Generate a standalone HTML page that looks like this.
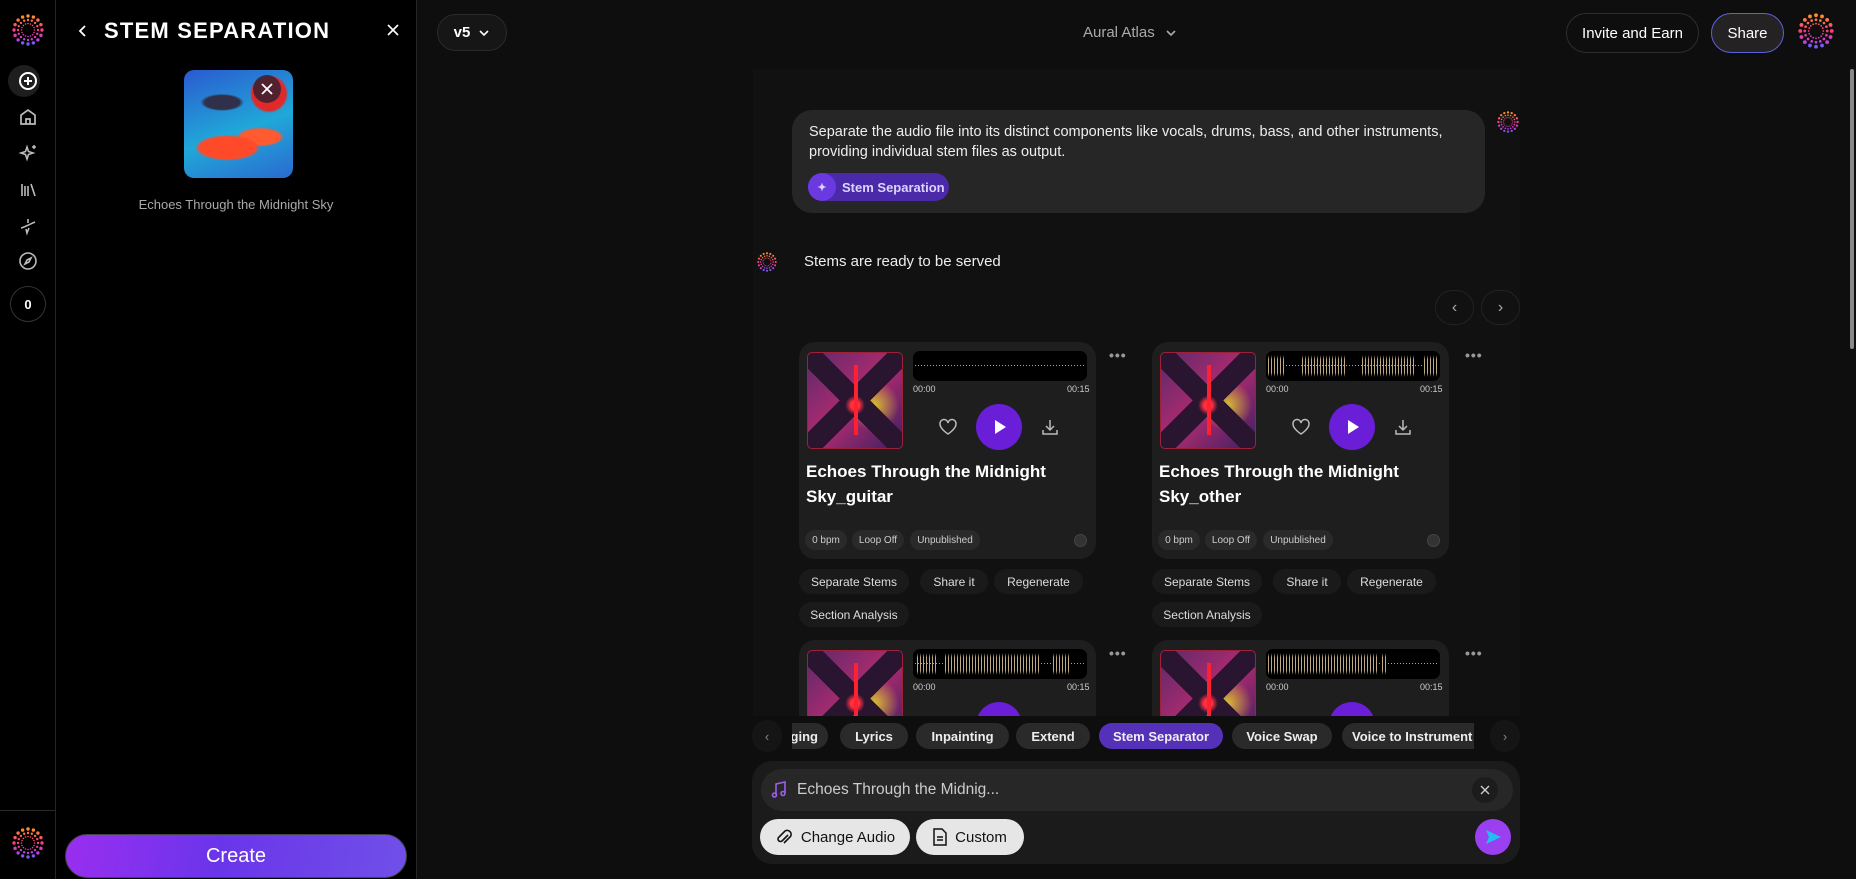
<!DOCTYPE html>
<html><head><meta charset="utf-8"><style>
*{box-sizing:border-box;margin:0;padding:0}
html,body{width:1856px;height:879px;overflow:hidden}
body{background:#0e0e0e;font-family:"Liberation Sans",sans-serif;color:#fff;position:relative}
.a{position:absolute}
.rail{left:0;top:0;width:56px;height:879px;background:#000;border-right:1px solid #262626}
.panel{left:56px;top:0;width:361px;height:879px;background:#000;border-right:1px solid #262626}
.ic{position:absolute;left:16px;width:24px;height:24px}
.pill{position:absolute;border-radius:999px;display:flex;align-items:center;justify-content:center;white-space:nowrap}
.card{position:absolute;width:297px;height:217px;background:#1e1e1e;border-radius:16px}
.art{position:absolute;left:8px;top:10px;width:96px;height:97px;border-radius:5px;border:1px solid #a0203a;background:
radial-gradient(circle at 50% 55%,#ff3040 0 6%,transparent 14%),
linear-gradient(45deg,transparent 42%,#2a1530 42% 58%,transparent 58%),
linear-gradient(-45deg,transparent 42%,#2a1530 42% 58%,transparent 58%),
radial-gradient(circle at 70% 55%,#d8c030 0,transparent 30%),
linear-gradient(135deg,#5a2a6a,#b02a70 50%,#3a2060);overflow:hidden}
.art:before{content:"";position:absolute;left:46px;top:12px;width:4px;height:70px;background:#ff2030}
.wave{position:absolute;left:114px;top:9px;width:174px;height:30px;background:#000;border-radius:7px;overflow:hidden}
.wave i{position:absolute;left:2px;right:2px;top:14px;height:1px;background:repeating-linear-gradient(90deg,#b8a47a 0 1px,transparent 1px 3px)}
.wave b{position:absolute;top:4px;height:22px;background:repeating-linear-gradient(90deg,#c0ab80 0 1px,transparent 1px 3px);-webkit-mask:linear-gradient(#0000 0,#000 20% 80%,#0000)}
.tm{position:absolute;top:42px;font-size:9px;color:#ccc}
.play{position:absolute;left:177px;top:62px;width:46px;height:46px;border-radius:50%;background:#6a1ed8}
.ttl{position:absolute;left:7px;top:117px;font-size:17px;font-weight:bold;line-height:25px;color:#fff}
.chip{position:absolute;top:188px;height:20px;background:#2a2a2a;border-radius:10px;font-size:10px;color:#ccc;display:flex;align-items:center;justify-content:center}
.dot3{position:absolute;top:17px;font-size:14px;letter-spacing:1px;color:#999;font-weight:bold}
.act{position:absolute;height:25px;background:#1a1a1a;border-radius:13px;font-size:12px;color:#ddd;display:flex;align-items:center;justify-content:center;white-space:nowrap}
.tool{position:absolute;top:7px;height:26px;background:#2a2a2a;border-radius:13px;font-size:13px;font-weight:bold;color:#eee;display:flex;align-items:center;justify-content:center;white-space:nowrap}
</style></head><body>
<svg width="0" height="0" style="position:absolute"><defs>
<linearGradient id="lg" x1="0" y1="-16" x2="0" y2="16" gradientUnits="userSpaceOnUse"><stop offset="0" stop-color="#ff9a1a"/><stop offset=".5" stop-color="#ff3a80"/><stop offset=".8" stop-color="#c040e0"/><stop offset="1" stop-color="#4070ff"/></linearGradient>
<symbol id="logo" viewBox="-16 -16 32 32"><g fill="url(#lg)">
<circle cx="14" cy="0" r="1.7"/><circle cx="12.93" cy="5.36" r="1.7"/><circle cx="9.9" cy="9.9" r="1.7"/><circle cx="5.36" cy="12.93" r="1.7"/><circle cx="0" cy="14" r="1.7"/><circle cx="-5.36" cy="12.93" r="1.7"/><circle cx="-9.9" cy="9.9" r="1.7"/><circle cx="-12.93" cy="5.36" r="1.7"/><circle cx="-14" cy="0" r="1.7"/><circle cx="-12.93" cy="-5.36" r="1.7"/><circle cx="-9.9" cy="-9.9" r="1.7"/><circle cx="-5.36" cy="-12.93" r="1.7"/><circle cx="0" cy="-14" r="1.7"/><circle cx="5.36" cy="-12.93" r="1.7"/><circle cx="9.9" cy="-9.9" r="1.7"/><circle cx="12.93" cy="-5.36" r="1.7"/>
<circle cx="10" cy="0" r="1.2"/><circle cx="9.24" cy="3.83" r="1.2"/><circle cx="7.07" cy="7.07" r="1.2"/><circle cx="3.83" cy="9.24" r="1.2"/><circle cx="0" cy="10" r="1.2"/><circle cx="-3.83" cy="9.24" r="1.2"/><circle cx="-7.07" cy="7.07" r="1.2"/><circle cx="-9.24" cy="3.83" r="1.2"/><circle cx="-10" cy="0" r="1.2"/><circle cx="-9.24" cy="-3.83" r="1.2"/><circle cx="-7.07" cy="-7.07" r="1.2"/><circle cx="-3.83" cy="-9.24" r="1.2"/><circle cx="0" cy="-10" r="1.2"/><circle cx="3.83" cy="-9.24" r="1.2"/><circle cx="7.07" cy="-7.07" r="1.2"/><circle cx="9.24" cy="-3.83" r="1.2"/>
<circle cx="6.5" cy="0" r=".8"/><circle cx="6" cy="2.49" r=".8"/><circle cx="4.6" cy="4.6" r=".8"/><circle cx="2.49" cy="6" r=".8"/><circle cx="0" cy="6.5" r=".8"/><circle cx="-2.49" cy="6" r=".8"/><circle cx="-4.6" cy="4.6" r=".8"/><circle cx="-6" cy="2.49" r=".8"/><circle cx="-6.5" cy="0" r=".8"/><circle cx="-6" cy="-2.49" r=".8"/><circle cx="-4.6" cy="-4.6" r=".8"/><circle cx="-2.49" cy="-6" r=".8"/><circle cx="0" cy="-6.5" r=".8"/><circle cx="2.49" cy="-6" r=".8"/><circle cx="4.6" cy="-4.6" r=".8"/><circle cx="6" cy="-2.49" r=".8"/>
</g></symbol></defs></svg>

<div class="a rail">
<svg class="a" style="left:12px;top:14px" width="32" height="32"><use href="#logo"/></svg>
<div class="a" style="left:8px;top:65px;width:32px;height:32px;border-radius:50%;background:#1e1e1e"></div>
<svg class="ic" style="top:69px" viewBox="0 0 24 24" fill="none" stroke="#fff" stroke-width="2"><circle cx="12" cy="12" r="8"/><path d="M12 8v8M8 12h8"/></svg>
<svg class="ic" style="top:105px" viewBox="0 0 24 24" fill="none" stroke="#bbb" stroke-width="1.7"><path d="M5 19V10l7-5 7 5v9zM10 19v-5h4v5"/></svg>
<svg class="ic" style="top:141px" viewBox="0 0 24 24" fill="none" stroke="#bbb" stroke-width="1.6"><path d="M11 6l1.5 4.5L17 12l-4.5 1.5L11 18l-1.5-4.5L5 12l4.5-1.5zM18 4v4M16 6h4"/></svg>
<svg class="ic" style="top:178px" viewBox="0 0 24 24" fill="none" stroke="#bbb" stroke-width="1.6"><path d="M6 6v12M9 8v10M12 8v10M15 6l4 12"/></svg>
<svg class="ic" style="top:214px" viewBox="0 0 24 24" fill="none" stroke="#bbb" stroke-width="1.6"><path d="M5 14c4-1 9-4 14-6M12 5v4M10 15l1 4 2-5"/></svg>
<svg class="ic" style="top:249px" viewBox="0 0 24 24" fill="none" stroke="#bbb" stroke-width="1.6"><circle cx="12" cy="12" r="8"/><path d="M15 9l-2 4-4 2 2-4z"/></svg>
<div class="a" style="left:10px;top:286px;width:36px;height:36px;border-radius:50%;border:1px solid #333;font-size:13px;font-weight:bold;display:flex;align-items:center;justify-content:center">0</div>
<div class="a" style="left:0;top:810px;width:55px;height:1px;background:#2a2a2a"></div>
<svg class="a" style="left:12px;top:827px" width="32" height="32"><use href="#logo"/></svg>
</div>

<div class="a panel">
<svg class="a" style="left:20px;top:23px" width="14" height="16" viewBox="0 0 14 16" fill="none" stroke="#fff" stroke-width="1.8"><path d="M9 3L4 8l5 5"/></svg>
<div class="a" style="left:48px;top:18px;font-size:22px;font-weight:900;letter-spacing:1.2px;line-height:26px">STEM SEPARATION</div>
<svg class="a" style="left:330px;top:23px" width="14" height="14" viewBox="0 0 14 14" stroke="#fff" stroke-width="1.6"><path d="M2 2l10 10M12 2L2 12"/></svg>
<div class="a" style="left:128px;top:70px;width:109px;height:108px;border-radius:10px;overflow:hidden;background:
radial-gradient(ellipse 30% 12% at 40% 72%,#ff4a2a 0 85%,transparent 100%),
radial-gradient(ellipse 22% 9% at 70% 62%,#ff5a30 0 80%,transparent 100%),
radial-gradient(ellipse 20% 8% at 35% 30%,#30304a 0 80%,transparent 100%),
radial-gradient(circle at 78% 22%,#e02a2a 0 14%,transparent 16%),
linear-gradient(160deg,#2a5ad0,#20a8d8 55%,#2a6ad0)">
<div class="a" style="left:69px;top:5px;width:28px;height:28px;border-radius:50%;background:rgba(20,30,50,.7)"></div>
<svg class="a" style="left:76px;top:12px" width="14" height="14" viewBox="0 0 14 14" stroke="#fff" stroke-width="1.8"><path d="M2 2l10 10M12 2L2 12"/></svg>
</div>
<div class="a" style="left:0;width:360px;top:197px;text-align:center;font-size:13px;color:#aaa">Echoes Through the Midnight Sky</div>
<div class="a" style="left:9px;top:834px;width:342px;height:44px;border-radius:22px;border:1px solid #444;background:linear-gradient(100deg,#9a2ef0,#6a35ea 45%,#7050e8);font-size:20px;display:flex;align-items:center;justify-content:center">Create</div>
</div>

<div class="pill" style="left:437px;top:14px;width:70px;height:37px;border:1px solid #2a2a2a;background:#161616;font-size:15px;font-weight:bold;gap:8px">v5 <svg width="12" height="8" viewBox="0 0 12 8" fill="none" stroke="#fff" stroke-width="1.6"><path d="M2 2l4 4 4-4"/></svg></div>
<div class="a" style="left:1083px;top:24px;font-size:15px;color:#aaa;display:flex;gap:10px;align-items:center">Aural Atlas <svg width="12" height="8" viewBox="0 0 12 8" fill="none" stroke="#aaa" stroke-width="1.6"><path d="M2 2l4 4 4-4"/></svg></div>
<div class="pill" style="left:1566px;top:13px;width:133px;height:40px;border:1px solid #2e2e2e;font-size:15px">Invite and Earn</div>
<div class="pill" style="left:1711px;top:13px;width:73px;height:40px;border:1.5px solid #5a63d8;background:#242222;font-size:15px">Share</div>
<svg class="a" style="left:1798px;top:13px" width="36" height="36"><use href="#logo"/></svg>
<div class="a" style="left:1850px;top:69px;width:4px;height:280px;background:#888;border-radius:2px"></div>

<div class="a" style="left:753px;top:69px;width:767px;height:810px;background:#111"></div>
<div class="a" style="left:792px;top:110px;width:693px;height:103px;background:#262626;border-radius:20px"></div>
<div class="a" style="left:809px;top:122px;width:672px;font-size:14.5px;line-height:20px;color:#eee">Separate the audio file into its distinct components like vocals, drums, bass, and other instruments, providing individual stem files as output.</div>
<div class="pill" style="left:808px;top:173px;width:141px;height:28px;background:#4a2aa8;font-size:13px;font-weight:bold;color:#dcd4ff;justify-content:flex-start">
<span style="width:28px;height:28px;border-radius:50%;background:#6a3ae0;display:flex;align-items:center;justify-content:center;margin-right:6px;font-size:11px">✦</span>Stem Separation</div>
<svg class="a" style="left:1497px;top:111px" width="22" height="22"><use href="#logo"/></svg>
<svg class="a" style="left:757px;top:252px" width="20" height="20"><use href="#logo"/></svg>
<div class="a" style="left:804px;top:253px;font-size:15px;color:#eee">Stems are ready to be served</div>
<div class="pill" style="left:1435px;top:290px;width:39px;height:35px;border:1px solid #222;color:#aaa;font-size:16px">‹</div>
<div class="pill" style="left:1481px;top:290px;width:39px;height:35px;border:1px solid #222;color:#aaa;font-size:16px">›</div>

<div class="a" style="left:753px;top:330px;width:767px;height:386px;overflow:hidden">
<div class="card" style="left:46px;top:12px"><div class="art"></div><div class="wave"><i></i></div>
<div class="tm" style="left:114px">00:00</div><div class="tm" style="left:268px">00:15</div>
<svg class="a" style="left:139px;top:76px" width="20" height="18" viewBox="0 0 20 18" fill="none" stroke="#bbb" stroke-width="1.5"><path d="M10 16S2 11 2 6a4 4 0 018-1 4 4 0 018 1c0 5-8 10-8 10z"/></svg>
<div class="play"><svg class="a" style="left:17px;top:15px" width="14" height="16" viewBox="0 0 14 16"><path d="M2 1l11 7-11 7z" fill="#fff"/></svg></div>
<svg class="a" style="left:241px;top:75px" width="20" height="20" viewBox="0 0 20 20" fill="none" stroke="#bbb" stroke-width="1.5"><path d="M10 3v10M6 9l4 4 4-4M3 13v4h14v-4"/></svg>
<div class="ttl">Echoes Through the Midnight<br>Sky_guitar</div>
<div class="chip" style="left:6px;width:42px">0 bpm</div><div class="chip" style="left:53px;width:52px">Loop Off</div><div class="chip" style="left:111px;width:70px">Unpublished</div>
<div class="a" style="left:275px;top:192px;width:13px;height:13px;border-radius:50%;background:#333;border:1px solid #444"></div>
</div>
<div class="dot3" style="left:356px">•••</div>
<div class="card" style="left:399px;top:12px"><div class="art"></div><div class="wave"><i></i><b style="left:2px;width:18px"></b><b style="left:36px;width:44px"></b><b style="left:96px;width:54px"></b><b style="left:158px;width:14px"></b></div>
<div class="tm" style="left:114px">00:00</div><div class="tm" style="left:268px">00:15</div>
<svg class="a" style="left:139px;top:76px" width="20" height="18" viewBox="0 0 20 18" fill="none" stroke="#bbb" stroke-width="1.5"><path d="M10 16S2 11 2 6a4 4 0 018-1 4 4 0 018 1c0 5-8 10-8 10z"/></svg>
<div class="play"><svg class="a" style="left:17px;top:15px" width="14" height="16" viewBox="0 0 14 16"><path d="M2 1l11 7-11 7z" fill="#fff"/></svg></div>
<svg class="a" style="left:241px;top:75px" width="20" height="20" viewBox="0 0 20 20" fill="none" stroke="#bbb" stroke-width="1.5"><path d="M10 3v10M6 9l4 4 4-4M3 13v4h14v-4"/></svg>
<div class="ttl">Echoes Through the Midnight<br>Sky_other</div>
<div class="chip" style="left:6px;width:42px">0 bpm</div><div class="chip" style="left:53px;width:52px">Loop Off</div><div class="chip" style="left:111px;width:70px">Unpublished</div>
<div class="a" style="left:275px;top:192px;width:13px;height:13px;border-radius:50%;background:#333;border:1px solid #444"></div>
</div>
<div class="dot3" style="left:712px">•••</div>
<div class="act" style="left:46px;top:239px;width:110px">Separate Stems</div><div class="act" style="left:167px;top:239px;width:68px">Share it</div><div class="act" style="left:241px;top:239px;width:89px">Regenerate</div>
<div class="act" style="left:46px;top:272px;width:110px">Section Analysis</div>
<div class="act" style="left:399px;top:239px;width:110px">Separate Stems</div><div class="act" style="left:520px;top:239px;width:68px">Share it</div><div class="act" style="left:594px;top:239px;width:89px">Regenerate</div>
<div class="act" style="left:399px;top:272px;width:110px">Section Analysis</div>
<div class="card" style="left:46px;top:310px"><div class="art"></div><div class="wave"><i></i><b style="left:4px;width:20px"></b><b style="left:32px;width:96px"></b><b style="left:140px;width:16px"></b></div>
<div class="tm" style="left:114px">00:00</div><div class="tm" style="left:268px">00:15</div><div class="play"></div></div>
<div class="dot3" style="left:356px;top:315px">•••</div>
<div class="card" style="left:399px;top:310px"><div class="art"></div><div class="wave"><i></i><b style="left:2px;width:110px"></b><b style="left:116px;width:4px"></b></div>
<div class="tm" style="left:114px">00:00</div><div class="tm" style="left:268px">00:15</div><div class="play"></div></div>
<div class="dot3" style="left:712px;top:315px">•••</div>
</div>

<div class="a" style="left:753px;top:716px;width:767px;height:163px;background:#0e0e0e"></div>
<div class="pill" style="left:752px;top:720px;width:30px;height:32px;background:#151515;color:#888;font-size:13px">‹</div>
<div class="a" style="left:792px;top:716px;width:682px;height:40px;overflow:hidden">
<div class="tool" style="left:-40px;width:76px;justify-content:flex-end;padding-right:10px">Merging</div>
<div class="tool" style="left:48px;width:68px">Lyrics</div>
<div class="tool" style="left:124px;width:93px">Inpainting</div>
<div class="tool" style="left:224px;width:74px">Extend</div>
<div class="tool" style="left:307px;width:124px;background:#5530b8">Stem Separator</div>
<div class="tool" style="left:440px;width:100px">Voice Swap</div>
<div class="tool" style="left:550px;width:150px;justify-content:flex-start;padding-left:10px">Voice to Instrument</div>
</div>
<div class="pill" style="left:1490px;top:720px;width:30px;height:32px;background:#151515;color:#888;font-size:13px">›</div>

<div class="a" style="left:752px;top:761px;width:768px;height:103px;background:#1b1b1b;border-radius:20px"></div>
<div class="a" style="left:761px;top:769px;width:752px;height:42px;background:#272727;border-radius:21px"></div>
<svg class="a" style="left:771px;top:781px" width="16" height="18" viewBox="0 0 16 18" fill="none" stroke="#9b5ef0" stroke-width="1.6"><path d="M5 14V3l9-2v11"/><circle cx="3.5" cy="14" r="2"/><circle cx="12" cy="12.5" r="2"/></svg>
<div class="a" style="left:797px;top:781px;font-size:15.5px;color:#ccc">Echoes Through the Midnig...</div>
<div class="pill" style="left:1472px;top:777px;width:26px;height:26px;background:#1c1c1c"><svg width="10" height="10" viewBox="0 0 10 10" stroke="#ccc" stroke-width="1.4"><path d="M1 1l8 8M9 1L1 9"/></svg></div>
<div class="pill" style="left:760px;top:819px;width:150px;height:36px;background:#e6e6e6;color:#111;font-size:15px;gap:8px"><svg width="18" height="20" viewBox="0 0 18 20" fill="none" stroke="#111" stroke-width="1.6"><path d="M13 8l-6 6a2.5 2.5 0 01-3.5-3.5L10 4a4 4 0 015.5 5.5L9 16"/></svg>Change Audio</div>
<div class="pill" style="left:916px;top:819px;width:108px;height:36px;background:#e6e6e6;color:#111;font-size:15px;gap:8px"><svg width="14" height="18" viewBox="0 0 14 18" fill="none" stroke="#111" stroke-width="1.5"><path d="M1 1h8l4 4v12H1zM4 9h6M4 12h6"/></svg>Custom</div>
<div class="pill" style="left:1475px;top:819px;width:36px;height:36px;background:#9a40f0"><svg width="18" height="18" viewBox="0 0 18 18"><path d="M2 2l15 7-15 7 3-7z" fill="#1ec0f0"/></svg></div>
</body></html>
